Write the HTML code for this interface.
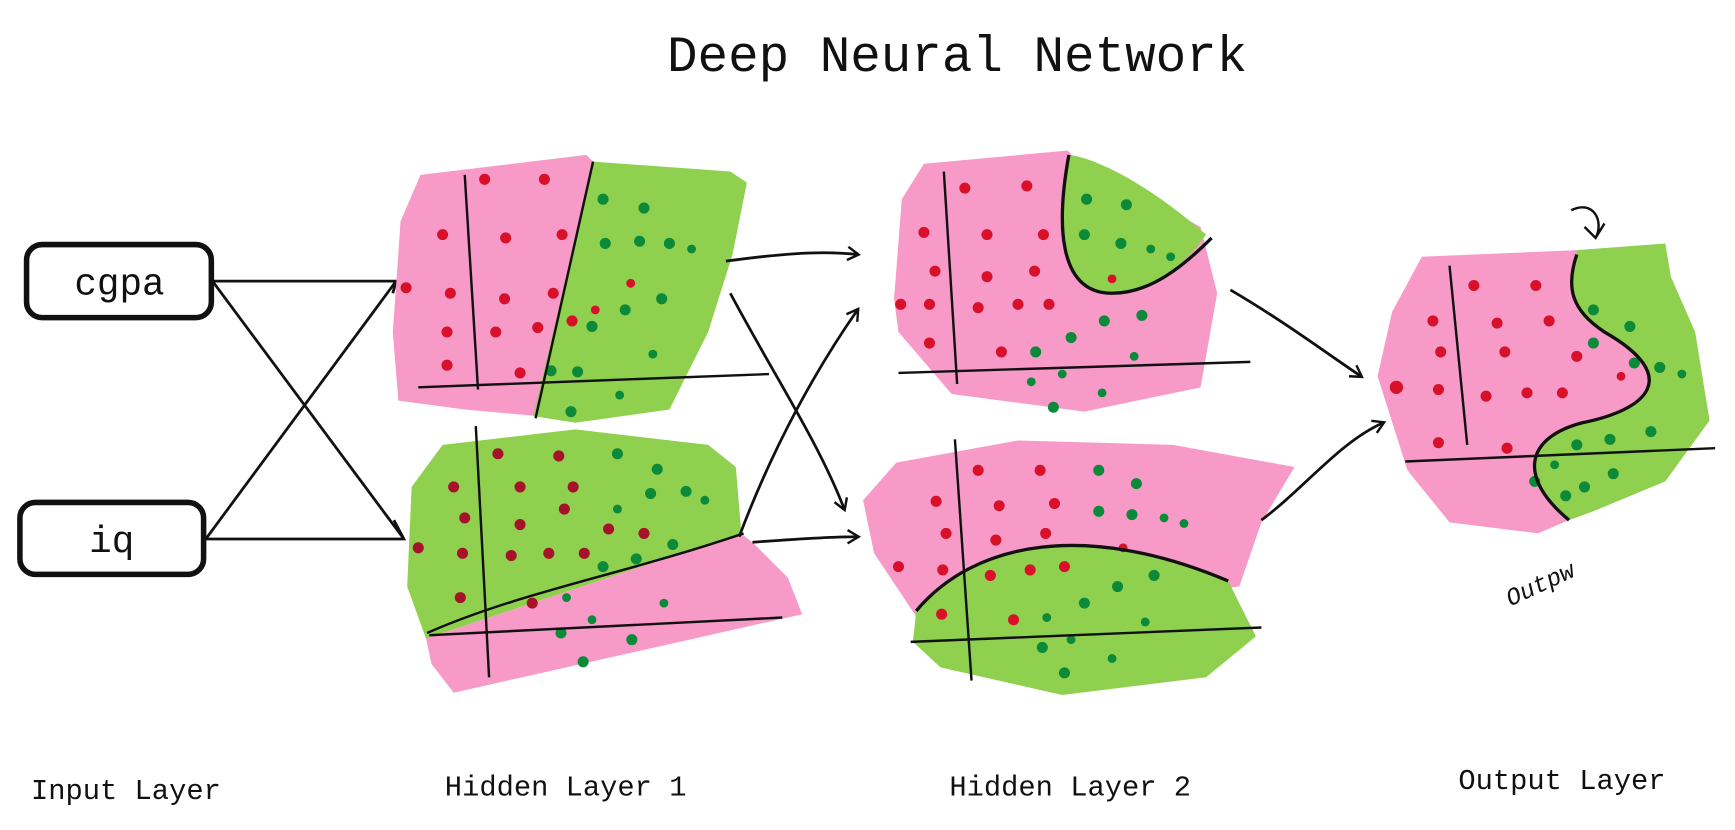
<!DOCTYPE html>
<html><head><meta charset="utf-8"><style>
html,body{margin:0;padding:0;background:#fff;overflow:hidden}
svg{display:block}
text{font-family:"Liberation Mono",monospace;fill:#111}
</style></head><body>
<svg width="1735" height="830" viewBox="0 0 1568 750" preserveAspectRatio="none" xmlns="http://www.w3.org/2000/svg">
<defs>
<marker id="ah" markerWidth="14" markerHeight="14" refX="10" refY="7" orient="auto" markerUnits="userSpaceOnUse">
<path d="M1,1 L11,7 L1,13" fill="none" stroke="#111" stroke-width="2.2"/>
</marker>
</defs>
<rect width="1568" height="750" fill="#fff"/>
<text x="865" y="64" font-size="46" text-anchor="middle">Deep Neural Network</text>

<!-- inputs -->
<rect x="24" y="221" width="167" height="66" rx="14" fill="#fff" stroke="#111" stroke-width="5"/>
<text x="108" y="266" font-size="34" text-anchor="middle">cgpa</text>
<rect x="18" y="454" width="166" height="65" rx="14" fill="#fff" stroke="#111" stroke-width="5"/>
<text x="101" y="499" font-size="34" text-anchor="middle">iq</text>
<g stroke="#111" stroke-width="2.5" fill="none">
<path d="M192,254 L358,254 L355,265"/>
<path d="M186,487 L365,487 L356,470"/>
<path d="M192,254 L365,487"/>
<path d="M186,487 L358,254"/>
</g>

<!-- H1 top -->
<polygon points="380,158 530,140 536,146 486,376 420,370 360,362 355,300 362,200" fill="#f79ac8"/>
<polygon points="536,146 660,155 675,165 662,230 640,300 605,370 520,382 482,376" fill="#8fd04f"/>
<g fill="#d8102a">
<circle cx="438" cy="162" r="5"/><circle cx="492" cy="162" r="5"/><circle cx="400" cy="212" r="5"/><circle cx="457" cy="215" r="5"/><circle cx="508" cy="212" r="5"/><circle cx="407" cy="265" r="5"/><circle cx="456" cy="270" r="5"/><circle cx="500" cy="265" r="5"/><circle cx="367" cy="260" r="5"/><circle cx="404" cy="300" r="5"/><circle cx="448" cy="300" r="5"/><circle cx="486" cy="296" r="5"/><circle cx="517" cy="290" r="5"/><circle cx="404" cy="330" r="5"/><circle cx="470" cy="337" r="5"/><circle cx="538" cy="280" r="4"/><circle cx="570" cy="256" r="4"/>
</g>
<g fill="#0b8a3a">
<circle cx="545" cy="180" r="5"/><circle cx="582" cy="188" r="5"/><circle cx="547" cy="220" r="5"/><circle cx="578" cy="218" r="5"/><circle cx="605" cy="220" r="5"/><circle cx="625" cy="225" r="4"/><circle cx="598" cy="270" r="5"/><circle cx="565" cy="280" r="5"/><circle cx="535" cy="295" r="5"/><circle cx="590" cy="320" r="4"/><circle cx="498" cy="335" r="5"/><circle cx="522" cy="336" r="5"/><circle cx="560" cy="357" r="4"/><circle cx="516" cy="372" r="5"/>
</g>
<g stroke="#111" stroke-width="2.2" fill="none">
<path d="M420,158 L432,352"/><path d="M378,350 L695,338"/><path d="M536,146 L484,378"/>
</g>

<!-- H1 bottom -->
<polygon points="400,402 520,388 640,402 665,422 670,482 385,577 368,530 372,440" fill="#8fd04f"/>
<polygon points="385,577 670,482 682,492 712,522 725,555 410,626 390,600" fill="#f79ac8"/>
<g fill="#a5122a">
<circle cx="450" cy="410" r="5"/><circle cx="505" cy="412" r="5"/><circle cx="410" cy="440" r="5"/><circle cx="470" cy="440" r="5"/><circle cx="518" cy="440" r="5"/><circle cx="420" cy="468" r="5"/><circle cx="470" cy="474" r="5"/><circle cx="510" cy="460" r="5"/><circle cx="550" cy="478" r="5"/><circle cx="378" cy="495" r="5"/><circle cx="418" cy="500" r="5"/><circle cx="462" cy="502" r="5"/><circle cx="496" cy="500" r="5"/><circle cx="528" cy="500" r="5"/><circle cx="582" cy="482" r="5"/><circle cx="416" cy="540" r="5"/><circle cx="481" cy="545" r="5"/>
</g>
<g fill="#0b8a3a">
<circle cx="558" cy="410" r="5"/><circle cx="594" cy="424" r="5"/><circle cx="588" cy="446" r="5"/><circle cx="620" cy="444" r="5"/><circle cx="637" cy="452" r="4"/><circle cx="558" cy="460" r="4"/><circle cx="608" cy="492" r="5"/><circle cx="575" cy="505" r="5"/><circle cx="545" cy="512" r="5"/><circle cx="512" cy="540" r="4"/><circle cx="535" cy="560" r="4"/><circle cx="507" cy="572" r="5"/><circle cx="600" cy="545" r="4"/><circle cx="571" cy="578" r="5"/><circle cx="527" cy="598" r="5"/>
</g>
<g stroke="#111" stroke-width="2.2" fill="none">
<path d="M430,385 L442,612"/><path d="M388,574 L707,558"/><path d="M386,572 C470,535 560,520 672,482"/>
</g>

<!-- H2 top -->
<polygon points="835,148 965,136 970,142 1085,205 1100,265 1085,350 980,372 860,356 812,300 808,270 815,180" fill="#f79ac8"/>
<path d="M966,140 C985,142 1030,160 1090,212 C1070,240 1040,265 1005,265 C955,265 955,200 966,140Z" fill="#8fd04f"/>
<g fill="#d8102a">
<circle cx="872" cy="170" r="5"/><circle cx="928" cy="168" r="5"/><circle cx="835" cy="210" r="5"/><circle cx="892" cy="212" r="5"/><circle cx="943" cy="212" r="5"/><circle cx="845" cy="245" r="5"/><circle cx="892" cy="250" r="5"/><circle cx="935" cy="245" r="5"/><circle cx="814" cy="275" r="5"/><circle cx="840" cy="275" r="5"/><circle cx="884" cy="278" r="5"/><circle cx="920" cy="275" r="5"/><circle cx="948" cy="275" r="5"/><circle cx="840" cy="310" r="5"/><circle cx="905" cy="318" r="5"/><circle cx="1005" cy="252" r="4"/>
</g>
<g fill="#0b8a3a">
<circle cx="982" cy="180" r="5"/><circle cx="1018" cy="185" r="5"/><circle cx="980" cy="212" r="5"/><circle cx="1013" cy="220" r="5"/><circle cx="1040" cy="225" r="4"/><circle cx="1058" cy="232" r="4"/><circle cx="1032" cy="285" r="5"/><circle cx="998" cy="290" r="5"/><circle cx="968" cy="305" r="5"/><circle cx="936" cy="318" r="5"/><circle cx="1025" cy="322" r="4"/><circle cx="960" cy="338" r="4"/><circle cx="932" cy="345" r="4"/><circle cx="996" cy="355" r="4"/><circle cx="952" cy="368" r="5"/>
</g>
<g stroke="#111" stroke-width="2.2" fill="none">
<path d="M853,155 L865,347"/><path d="M812,337 L1130,327"/><path d="M966,140 C955,200 955,265 1005,265 C1040,265 1070,240 1095,215" stroke-width="3"/>
</g>

<!-- H2 bottom -->
<polygon points="810,418 920,398 1060,402 1170,422 1140,472 1120,530 830,560 790,500 780,452" fill="#f79ac8"/>
<path d="M828,553 C880,490 980,470 1110,525 L1135,575 L1090,612 L960,628 L850,603 L825,580Z" fill="#8fd04f"/>
<g fill="#d8102a">
<circle cx="884" cy="425" r="5"/><circle cx="940" cy="425" r="5"/><circle cx="846" cy="453" r="5"/><circle cx="903" cy="457" r="5"/><circle cx="953" cy="455" r="5"/><circle cx="855" cy="482" r="5"/><circle cx="900" cy="488" r="5"/><circle cx="945" cy="482" r="5"/><circle cx="812" cy="512" r="5"/><circle cx="852" cy="515" r="5"/><circle cx="895" cy="520" r="5"/><circle cx="931" cy="515" r="5"/><circle cx="962" cy="512" r="5"/><circle cx="1015" cy="495" r="4"/><circle cx="851" cy="555" r="5"/><circle cx="916" cy="560" r="5"/>
</g>
<g fill="#0b8a3a">
<circle cx="993" cy="425" r="5"/><circle cx="1027" cy="437" r="5"/><circle cx="993" cy="462" r="5"/><circle cx="1023" cy="465" r="5"/><circle cx="1052" cy="468" r="4"/><circle cx="1070" cy="473" r="4"/><circle cx="1043" cy="520" r="5"/><circle cx="1010" cy="530" r="5"/><circle cx="980" cy="545" r="5"/><circle cx="946" cy="558" r="4"/><circle cx="1035" cy="562" r="4"/><circle cx="968" cy="578" r="4"/><circle cx="942" cy="585" r="5"/><circle cx="1005" cy="595" r="4"/><circle cx="962" cy="608" r="5"/>
</g>
<g stroke="#111" stroke-width="2.2" fill="none">
<path d="M863,397 L878,615"/><path d="M823,580 L1140,567"/><path d="M828,552 C880,490 980,470 1110,525" stroke-width="3"/>
</g>

<!-- Output -->
<path d="M1285,232 L1425,226 C1418,270 1420,285 1450,300 C1520,340 1490,370 1430,382 C1380,395 1370,430 1418,470 L1390,482 L1310,472 L1272,425 L1245,340 L1258,282Z" fill="#f79ac8"/>
<path d="M1425,226 L1505,220 L1510,250 L1532,300 L1545,380 L1505,435 L1440,462 L1418,470 C1370,430 1380,395 1430,382 C1490,370 1520,340 1450,300 C1420,285 1418,270 1425,226Z" fill="#8fd04f"/>
<g fill="#d8102a">
<circle cx="1332" cy="258" r="5"/><circle cx="1388" cy="258" r="5"/><circle cx="1295" cy="290" r="5"/><circle cx="1353" cy="292" r="5"/><circle cx="1400" cy="290" r="5"/><circle cx="1302" cy="318" r="5"/><circle cx="1360" cy="318" r="5"/><circle cx="1425" cy="322" r="5"/><circle cx="1262" cy="350" r="6"/><circle cx="1300" cy="352" r="5"/><circle cx="1343" cy="358" r="5"/><circle cx="1380" cy="355" r="5"/><circle cx="1412" cy="355" r="5"/><circle cx="1465" cy="340" r="4"/><circle cx="1300" cy="400" r="5"/><circle cx="1362" cy="405" r="5"/>
</g>
<g fill="#0b8a3a">
<circle cx="1440" cy="280" r="5"/><circle cx="1473" cy="295" r="5"/><circle cx="1440" cy="310" r="5"/><circle cx="1477" cy="328" r="5"/><circle cx="1500" cy="332" r="5"/><circle cx="1520" cy="338" r="4"/><circle cx="1492" cy="390" r="5"/><circle cx="1455" cy="397" r="5"/><circle cx="1425" cy="402" r="5"/><circle cx="1387" cy="435" r="5"/><circle cx="1415" cy="448" r="5"/><circle cx="1458" cy="428" r="5"/><circle cx="1432" cy="440" r="5"/><circle cx="1405" cy="420" r="4"/>
</g>
<g stroke="#111" stroke-width="2.2" fill="none">
<path d="M1310,240 L1326,402"/><path d="M1270,417 L1550,405"/>
<path d="M1425,230 C1415,260 1420,280 1450,300 C1520,340 1490,370 1430,382 C1380,395 1370,430 1418,470" stroke-width="3"/>
<path d="M1420,190 C1440,180 1450,200 1442,215 M1432,205 L1442,215 L1450,202"/>
</g>
<text x="1365" y="548" font-size="22" font-style="italic" transform="rotate(-25 1365 548)">Outpw</text>

<!-- arrows -->
<g stroke="#111" stroke-width="2.5" fill="none" marker-end="url(#ah)">
<path d="M656,236 C700,230 740,226 775,230"/>
<path d="M660,265 C700,340 740,400 763,460"/>
<path d="M668,485 C700,400 740,330 775,280"/>
<path d="M680,490 C720,487 750,485 775,485"/>
<path d="M1112,262 C1160,290 1200,320 1230,340"/>
<path d="M1140,470 C1180,440 1210,400 1250,382"/>
</g>

<!-- labels -->
<text x="28" y="722" font-size="26">Input Layer</text>
<text x="402" y="719" font-size="26">Hidden Layer 1</text>
<text x="858" y="719" font-size="26">Hidden Layer 2</text>
<text x="1318" y="713" font-size="26">Output Layer</text>
</svg>
</body></html>
